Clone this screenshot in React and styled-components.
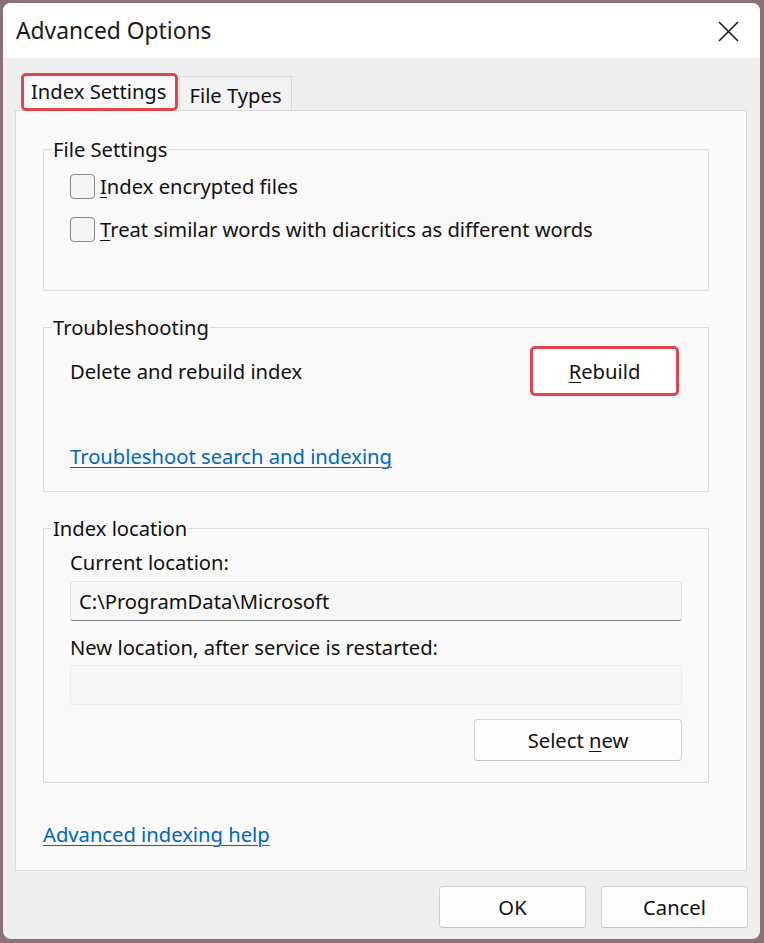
import React from "react";
import styled, { createGlobalStyle } from "styled-components";

const GlobalStyle = createGlobalStyle`
  html, body {
    margin: 0;
    padding: 0;
    background: #8a7175;
    font-family: "Noto Sans", "Open Sans", sans-serif;
    color: #111;
  }
  * { box-sizing: border-box; }
`;

const TEXT = "20.2px";

const Backdrop = styled.div`
  width: 764px;
  height: 943px;
  padding: 3px 4px 4px 3px;
`;

const Window = styled.div`
  height: 100%;
  display: flex;
  flex-direction: column;
  border-radius: 8px;
  overflow: hidden;
  background: #efefef;
`;

const TitleBar = styled.div`
  height: 55px;
  flex: none;
  display: flex;
  align-items: center;
  justify-content: space-between;
  padding: 0 21px 0 13px;
  background: #ffffff;
  font-size: 22.8px;
  color: #1a1a1a;
`;

const CloseButton = styled.button`
  border: 0;
  background: none;
  padding: 0;
  width: 22px;
  height: 22px;
  display: grid;
  place-items: center;
  margin-top: 1px;
`;

const Body = styled.div`
  flex: 1;
  display: flex;
  flex-direction: column;
  padding: 15px 13px 12px 12px;
`;

const TabRow = styled.div`
  display: flex;
  align-items: flex-end;
  gap: 1px;
  padding-left: 6px;
  margin-bottom: -1px;
  position: relative;
  z-index: 1;
`;

const Tab = styled.div`
  display: flex;
  align-items: center;
  font-size: ${TEXT};
  white-space: nowrap;
  ${(p) =>
    p.$selected
      ? `
    height: 38px;
    padding: 0 9px 2px 7px;
    background: #f9f9f9;
    border: 3px solid #e2454b;
    border-radius: 5px;
  `
      : `
    height: 34px;
    margin-bottom: 1px;
    padding: 2px 9px 0 9px;
    background: #f2f2f2;
    border: 1px solid #dadada;
    border-bottom: none;
  `}
`;

const Panel = styled.div`
  height: 761px;
  display: flex;
  flex-direction: column;
  background: #f9f9f9;
  border: 1px solid #dadada;
  padding: 25px 37px 0 27px;
`;

const Group = styled.fieldset`
  margin: 0 0 23px 0;
  height: ${(p) => p.$height}px;
  border: 1px solid #dcdcdc;
  padding: 0 27px 0 26px;
  display: flex;
  flex-direction: column;
  min-width: 0;
`;

const Legend = styled.legend`
  font-size: ${TEXT};
  line-height: 26px;
  margin-left: -18px;
  padding: 0 1px;
`;

const CheckRow = styled.label`
  display: flex;
  align-items: center;
  gap: 5px;
  height: 30px;
  font-size: ${TEXT};
  margin-top: ${(p) => p.$top}px;
`;

const Box = styled.span`
  width: 25px;
  height: 25px;
  border: 1px solid #878787;
  border-radius: 4px;
  background: #f4f4f4;
  flex: none;
`;

const Key = styled.span`
  text-decoration: underline;
  text-underline-offset: 3px;
  text-decoration-thickness: 1px;
`;

const Row = styled.div`
  display: flex;
  align-items: center;
  justify-content: space-between;
  margin-top: 6px;
  font-size: ${TEXT};
`;

const Button = styled.button`
  font-family: inherit;
  font-size: ${TEXT};
  color: #111;
  height: ${(p) => p.$h || 42}px;
  width: ${(p) => p.$w}px;
  background: #fdfdfd;
  border: 1px solid #d3d3d3;
  border-bottom-color: #c2c2c2;
  border-radius: 4px;
  padding: 0;
  ${(p) =>
    p.$marked &&
    `
    border: 3px solid #e2454b;
    border-radius: 5px;
    margin-right: 2px;
    background: #ffffff;
  `}
`;

const Link = styled.a`
  color: #0067c0;
  font-size: ${TEXT};
  line-height: 26px;
  text-decoration: underline;
  text-underline-offset: 3px;
  text-decoration-thickness: 1px;
  align-self: flex-start;
  margin-top: ${(p) => p.$top}px;
  margin-left: ${(p) => p.$left || 0}px;
`;

const Label = styled.div`
  font-size: ${TEXT};
  line-height: 26px;
  margin-top: ${(p) => p.$top}px;
`;

const Field = styled.div`
  height: 40px;
  margin-top: ${(p) => p.$top}px;
  margin-right: -1px;
  display: flex;
  align-items: center;
  padding-left: 8px;
  font-size: ${TEXT};
  background: ${(p) => (p.$disabled ? "#f8f8f8" : "#f6f6f6")};
  border: 1px solid ${(p) => (p.$disabled ? "#ececec" : "#e3e3e3")};
  border-bottom-color: ${(p) => (p.$disabled ? "#ececec" : "#868686")};
  border-radius: 3px;
`;

const RightAlign = styled.div`
  display: flex;
  justify-content: flex-end;
  margin-top: ${(p) => p.$top}px;
  margin-right: -1px;
`;

const Footer = styled.div`
  display: flex;
  justify-content: flex-end;
  gap: 15px;
  margin-top: 15px;
  margin-right: -1px;
`;

export default function App() {
  return (
    <>
      <GlobalStyle />
      <Backdrop>
        <Window>
          <TitleBar>
            <span>Advanced Options</span>
            <CloseButton aria-label="Close">
              <svg width="21" height="21" viewBox="0 0 21 21">
                <path d="M1 1 L20 20 M20 1 L1 20" stroke="#1a1a1a" strokeWidth="1.6" fill="none" />
              </svg>
            </CloseButton>
          </TitleBar>
          <Body>
            <TabRow>
              <Tab $selected>Index Settings</Tab>
              <Tab>File Types</Tab>
            </TabRow>
            <Panel>
              <Group $height={155}>
                <Legend>File Settings</Legend>
                <CheckRow $top={9}>
                  <Box />
                  <span>
                    <Key>I</Key>ndex encrypted files
                  </span>
                </CheckRow>
                <CheckRow $top={13}>
                  <Box />
                  <span>
                    <Key>T</Key>reat similar words with diacritics as different words
                  </span>
                </CheckRow>
              </Group>

              <Group $height={178}>
                <Legend>Troubleshooting</Legend>
                <Row>
                  <span>Delete and rebuild index</span>
                  <Button $marked $w={149} $h={50}>
                    <Key>R</Key>ebuild
                  </Button>
                </Row>
                <Link href="#" $top={47}>
                  Troubleshoot search and indexing
                </Link>
              </Group>

              <Group $height={268}>
                <Legend>Index location</Legend>
                <Label $top={8}>Current location:</Label>
                <Field $top={6}>C:\ProgramData\Microsoft</Field>
                <Label $top={13}>New location, after service is restarted:</Label>
                <Field $top={5} $disabled />
                <RightAlign $top={14}>
                  <Button $w={208}>
                    Select <Key>n</Key>ew
                  </Button>
                </RightAlign>
              </Group>

              <Link href="#" $top={15}>
                Advanced indexing help
              </Link>
            </Panel>
            <Footer>
              <Button $w={147}>OK</Button>
              <Button $w={147}>Cancel</Button>
            </Footer>
          </Body>
        </Window>
      </Backdrop>
    </>
  );
}
